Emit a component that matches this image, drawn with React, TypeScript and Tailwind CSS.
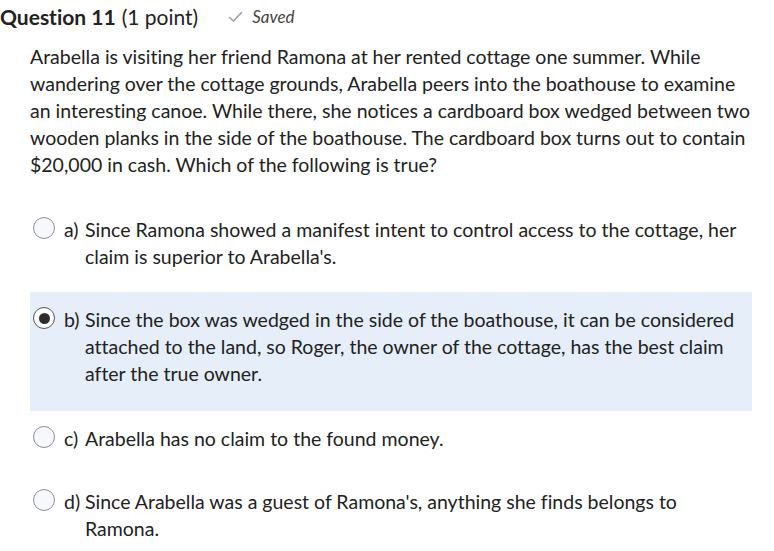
import React from "react";

const options = [
  { key: "a)", text: "Since Ramona showed a manifest intent to control access to the cottage, her claim is superior to Arabella's.", selected: false },
  { key: "b)", text: "Since the box was wedged in the side of the boathouse, it can be considered attached to the land, so Roger, the owner of the cottage, has the best claim after the true owner.", selected: true },
  { key: "c)", text: "Arabella has no claim to the found money.", selected: false },
  { key: "d)", text: "Since Arabella was a guest of Ramona's, anything she finds belongs to Ramona.", selected: false },
];

function Radio({ selected }: { selected: boolean }) {
  return (
    <div
      className={
        "mt-[-3px] flex h-[22px] w-[22px] shrink-0 items-center justify-center rounded-full " +
        (selected ? "border-[1.5px] border-[#555] bg-white" : "border border-[#8b8f96] bg-[#f7f8fc]")
      }
    >
      {selected && <div className="h-[11px] w-[11px] rounded-full bg-[#2d2d2d]" />}
    </div>
  );
}

export default function App() {
  return (
    <div className="h-[551px] w-[774px] overflow-hidden bg-white text-[#222] [font-variant-ligatures:none]" style={{ fontFamily: "Lato, 'Noto Sans', sans-serif" }}>
      <div className="flex items-center pt-[3px] text-[21px] leading-[27px]">
        <span className="font-bold">Question 11</span>
        <span className="ml-[6px]">(1 point)</span>
        <svg className="ml-[30px]" width="15" height="12" viewBox="0 0 15 12">
          <path d="M1.5 6.5 L5.5 10 L13.5 1.5" fill="none" stroke="#9aa0a6" strokeWidth="1.6" strokeLinecap="round" strokeLinejoin="round" />
        </svg>
        <span className="ml-[9px] text-[17px] italic text-[#444]">Saved</span>
      </div>
      <div className="pl-[30px] pr-[22px]">
        <p className="mt-[13px] text-[19.5px] leading-[27px]">
          Arabella is visiting her friend Ramona at her rented cottage one summer. While wandering over the cottage grounds, Arabella peers into the boathouse to examine an interesting canoe. While there, she notices a cardboard box wedged between two wooden planks in the side of the boathouse. The cardboard box turns out to contain $20,000 in cash. Which of the following is true?
        </p>
        <div className="mt-[24px] flex flex-col">
          {options.map((o) => (
            <div
              key={o.key}
              className={"flex items-start pl-[3px] pr-[10px] pt-[14px] pb-[22px] " + (o.selected ? "bg-[#e5eef9] pb-[24px]" : "")}
            >
              <div className="flex h-[27px] items-center">
                <Radio selected={o.selected} />
              </div>
              <span className="ml-[9px] w-[21px] shrink-0 text-[19.5px] leading-[27px]">{o.key}</span>
              <span className="text-[19.5px] leading-[27px]">{o.text}</span>
            </div>
          ))}
        </div>
      </div>
    </div>
  );
}
